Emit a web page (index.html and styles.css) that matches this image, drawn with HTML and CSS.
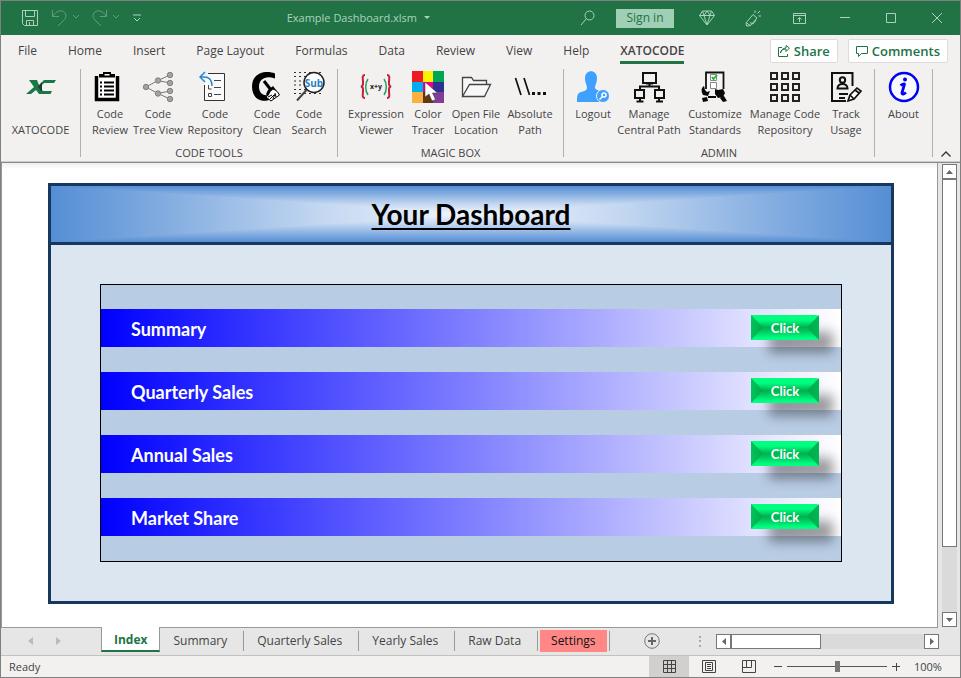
FILE: index.html
```html
<!DOCTYPE html>
<html lang="en">
<head>
<meta charset="utf-8">
<title>Example Dashboard.xlsm</title>
<link rel="stylesheet" href="styles.css">
</head>
<body>
<header class="titlebar">
  <div class="quick">
    <button class="tb-btn" aria-label="Save"><svg width="16" height="16" viewBox="0 0 16 16"><path d="M.5 .5h15v15h-13l-2-2zM3.500 .5v6h9v-6M4.500 15.500v-5h7v5M7.500 12v3"/></svg></button>
    <button class="tb-btn dim" aria-label="Undo"><svg width="28" height="18" viewBox="0 0 28 18"><path d="M1.500 1v6.500h6.500M2 7C5 2 10 .5 13 3c3 2.500 2 6 0 8l-6 6"/><path d="M22 6l3 3 3-3"/></svg></button>
    <button class="tb-btn dim" aria-label="Redo"><svg width="28" height="18" viewBox="0 0 28 18"><path d="M14.500 1v6.500H8M14 7C11 2 6 .5 3 3c-3 2.500-2 6 0 8l6 6"/><path d="M21 6l3 3 3-3"/></svg></button>
    <button class="tb-btn" aria-label="Customize Quick Access Toolbar"><svg width="8" height="8" viewBox="0 0 8 8"><path d="M0 1h8M1 4l3 3 3-3"/></svg></button>
  </div>
  <button class="doc-name">Example Dashboard.xlsm <svg width="6" height="4" viewBox="0 0 6 4"><path class="solid" d="M0 0h6l-3 3z"/></svg></button>
  <div class="account">
    <button class="tb-btn" aria-label="Search"><svg width="16" height="16" viewBox="0 0 16 16"><circle cx="9.500" cy="5.500" r="4.500"/><path d="M6.300 8.700L1 15"/></svg></button>
    <button class="signin">Sign in</button>
  </div>
  <div class="window-controls">
    <button class="tb-btn" aria-label="Premium"><svg width="16" height="16" viewBox="0 0 16 16"><path d="M3.500 1h9L15.500 5.500 8 15 .5 5.500zM.5 5.500h15M3.500 1l1.500 4.500L8 15l3-9.500L12.500 1M5 5.500L8 1l3 4.500"/></svg></button>
    <button class="tb-btn" aria-label="What's new"><svg width="16" height="17" viewBox="0 0 16 17"><path d="M8 4.500l4 3.500-6.500 7.500-4 .5L1 13zM1.500 13l4 2.500M11 10l-3 4-3-1.500M10 3V.5M12.500 3.500L15 1M13.500 6H16"/></svg></button>
    <button class="tb-btn" aria-label="Ribbon display options"><svg width="13" height="11" viewBox="0 0 13 11"><path d="M.5 .5h12v10H.5zM.5 2.500h12M6.500 9V4.500M4.500 6.500l2-2 2 2"/></svg></button>
    <button class="tb-btn" aria-label="Minimize"><svg width="10" height="10" viewBox="0 0 10 10"><path d="M0 4.500h10"/></svg></button>
    <button class="tb-btn" aria-label="Maximize"><svg width="10" height="10" viewBox="0 0 10 10"><path d="M.5 .5h9v9h-9z"/></svg></button>
    <button class="tb-btn" aria-label="Close"><svg width="10" height="10" viewBox="0 0 10 10"><path d="M0 0l10 10M10 0L0 10"/></svg></button>
  </div>
</header>

<nav class="menu">
  <a href="#">File</a><a href="#">Home</a><a href="#">Insert</a><a href="#">Page Layout</a><a href="#">Formulas</a><a href="#">Data</a><a href="#">Review</a><a href="#">View</a><a href="#">Help</a><a href="#" class="active">XATOCODE</a>
  <div class="menu-actions">
    <button class="action"><svg width="12" height="12" viewBox="0 0 12 12"><path d="M4 2.500H.5v9h9V9M2.500 8C3 5 5 4 8 4v2.500L11.500 3 8 .5V3C5 3 3 5 2.500 8z"/></svg>Share</button>
    <button class="action"><svg width="12" height="12" viewBox="0 0 12 12"><path d="M.5 1.500h11v7h-6l-3 3v-3h-2z"/></svg>Comments</button>
  </div>
</nav>

<section class="ribbon">
  <div class="group g-logo">
    <button class="tool">
      <svg width="32" height="32" viewBox="0 0 32 32"><g fill="#187848"><path d="M4 9h8l2 5 5-5h12l-2 3H19l-4 4 3 4h9l-1.500 3H14l-3-4-5 4H1l8-7z"/></g><path d="M17 11l-4 5 4 5z" fill="#223c33"/><path d="M20 13h8l-1 2h-7l-1 4h6" fill="none" stroke="#f3f1f0" stroke-width="2"/></svg>
      <span><br>XATOCODE</span></button>
  </div>
  <div class="group g-code">
    <div class="tools">
      <button class="tool"><svg width="32" height="32" viewBox="4 0 32 32"><path d="M6.500 5v23.500h21V5" fill="#fff" stroke="#000" stroke-width="3.500"/><path d="M9 6.500V3h4V1h8v2h4v3.500z" fill="#000"/><path d="M14.500 3h5v1.500h-5z" fill="#fff"/><path d="M10 11.500h2m2 0h10M10 15.500h2m2 0h10M10 19.500h2m2 0h10M10 23.500h2m2 0h10" stroke="#000" stroke-width="2"/></svg><span>Code<br>Review</span></button>
      <button class="tool"><svg width="32" height="32" viewBox="0 0 32 32"><path d="M4 16l12-6.500L28 4M16 9.500L28 12M4 16l12 6.500L28 20M16 22.500L28 28" fill="none" stroke="#777"/><g fill="#a3a3a3" stroke="#808080"><circle cx="4" cy="16" r="2.700"/><circle cx="16" cy="9.500" r="2.700"/><circle cx="16" cy="22.500" r="2.700"/><circle cx="28" cy="4" r="2.700"/><circle cx="28" cy="12" r="2.700"/><circle cx="28" cy="20" r="2.700"/><circle cx="28" cy="28" r="2.700"/></g></svg><span>Code<br>Tree View</span></button>
      <button class="tool"><svg width="32" height="32" viewBox="0 0 32 32"><path d="M5.500 14v15.500h20v-27H9" fill="#fafafa" stroke="#333"/><path d="M15 9.500h7M15 16.500h7M15 23.500h7M9.500 14v4h3M9.500 22.500h3v3h-3z" fill="none" stroke="#444"/><path d="M6 1L1 6l5 5M1 6h4c6 0 8 4 8 9" fill="none" stroke="#2488d8" stroke-width="1.500"/></svg><span>Code<br>Repository</span></button>
      <button class="tool"><svg width="32" height="32" viewBox="0 0 32 32"><path d="M24 7.500V2.500C16-1 1 1 1 15.500S14 32 20 28l-3-4c-6 1-9-3-9-8.500C8 8 15 4 24 7.500z" fill="#000"/><path d="M13 10l7 9" stroke="#000" stroke-width="3"/><path d="M17 19l5-4 6 8-8 6-5-6z" fill="#000"/><path d="M19 20.500l3-2.500c3 1 5 3 6.500 6L20 30l-5-4c2-1 3-3 4-5.500zM17 26l4-2M19 28l4-4M22 28l2-5M25 26l-1-4" fill="#fff" stroke="#000"/></svg><span>Code<br>Clean</span></button>
      <button class="tool"><svg width="32" height="32" viewBox="0 0 32 32"><path d="M1 1.500h30M1 5.500h30M1 10h30M1 14h30M1 18.500h30M1 22.500h30" stroke="#333" stroke-dasharray="2 3"/><path d="M13.500 19L4 29.500" stroke="#444" stroke-width="2"/><circle cx="21" cy="11.500" r="10" fill="#fff" stroke="#222" stroke-width="1.500"/><text x="21" y="15.500" text-anchor="middle" class="sub-text">Sub</text></svg><span>Code<br>Search</span></button>
    </div>
    <h2>CODE TOOLS</h2>
  </div>
  <div class="group g-magic">
    <div class="tools">
      <button class="tool"><svg width="32" height="32" viewBox="0 0 32 32"><path d="M5 4C1 4 3.500 9 3 13c0 2-2 2.500-2 2.500S3 16 3 18c.5 4-2 9 2 9M27 4c4 0 1.500 5 2 9 0 2 2 2.500 2 2.500s-2 .5-2 2.500c-.5 4 2 9-2 9" fill="none" stroke="#c8203c" stroke-width="2"/><path d="M8 8c-3 4-3 12 0 16M24 8c3 4 3 12 0 16" fill="none" stroke="#20a060" stroke-width="1.500"/><text x="16" y="18" text-anchor="middle" class="xy-text">x+y</text></svg><span>Expression<br>Viewer</span></button>
      <button class="tool"><svg width="32" height="32" viewBox="0 0 32 32"><path fill="#ed1c24" d="M0 0h11v11H0z"/><path fill="#fff200" d="M11 0h10v11H11z"/><path fill="#00a651" d="M21 0h11v11H21z"/><path fill="#00aeef" d="M0 11h11v10H0z"/><path fill="#ec008c" d="M11 11h10v10H11z"/><path fill="#2e3192" d="M21 11h11v10H21z"/><path fill="#fbb040" d="M0 21h11v11H0z"/><path fill="#603913" d="M11 21h10v11H11z"/><path fill="#7f3f98" d="M21 21h11v11H21z"/><path d="M13 11v15l4-3 3 7 3.500-1.500-3-6.500h5z" fill="#fff" stroke="#333" stroke-width=".5"/></svg><span>Color<br>Tracer</span></button>
      <button class="tool"><svg width="32" height="32" viewBox="0 0 32 32"><path d="M2.500 25V6.500h9l2 3h13v4M2.500 25.500l7-12h21l-6 12z" fill="#f8f8f8" stroke="#444" stroke-width="1.300"/></svg><span>Open File<br>Location</span></button>
      <button class="tool"><svg width="32" height="32" viewBox="0 0 32 32"><path d="M1.500 7l5.500 17M10 7l5.500 17" stroke="#111" stroke-width="1.700"/><path fill="#111" d="M18 21h3v3h-3zM23.500 21h3v3h-3zM29 21h3v3h-3z"/></svg><span>Absolute<br>Path</span></button>
    </div>
    <h2>MAGIC BOX</h2>
  </div>
  <div class="group g-admin">
    <div class="tools">
      <button class="tool"><svg width="32" height="32" viewBox="0 0 32 32"><path d="M8 7c0-9 12-9 12 0 0 5-2 7-2 10 1 3 8 2 9 7v7H0c0-5 0-9 4-10 4-1 6-2 6-4 0-3-2-5-2-10z" fill="#3fa0ff"/><circle cx="26" cy="25" r="6.500" fill="#3fa0ff" stroke="#f3f1f0"/><path d="M22.500 28.500l3-3" stroke="#fff" stroke-width="1.500"/><circle cx="27" cy="24" r="2" fill="none" stroke="#fff" stroke-width="1.500"/></svg><span>Logout</span></button>
      <button class="tool"><svg width="32" height="32" viewBox="0 0 32 32"><path d="M10 2h13v10H10zM2 19h9v8H2zM22 19h9v8h-9zM16.500 12v4M7 19v-3.500h19V19M7 27v3M26 27v3M3.500 30.500h7M23 30.500h7M13 12.500h7" fill="none" stroke="#111" stroke-width="2"/></svg><span>Manage<br>Central Path</span></button>
      <button class="tool"><svg width="32" height="32" viewBox="0 0 32 32"><path d="M7 18V1.500h17.500V18" fill="#f5f6f6" stroke="#111" stroke-width="1.800"/><path d="M11.500 3.500h6v6h-6zM11.500 11.500h6v6h-6z" fill="#fff" stroke="#888"/><path d="M13 6l1.500 2L18 4" fill="none" stroke="#22b422" stroke-width="1.800"/><path d="M5 15c-3 2-3 5-1 9l5 1 2-5-3 1-2-2zM3 27l5-1 1 4-5 1zM16 18l3 1 5-1 2 4-2 4-5 1-3-4zM21 27l4-2 3 5-4 1zM9 25h8v2H9z" fill="#080808"/></svg><span>Customize<br>Standards</span></button>
      <button class="tool"><svg width="32" height="32" viewBox="0 0 32 32"><path d="M2 2h6v6H2zM13 2h6v6h-6zM24 2h6v6h-6zM2 13h6v6H2zM13 13h6v6h-6zM24 13h6v6h-6zM2 24h6v6H2zM13 24h6v6h-6zM24 24h6v6h-6z" fill="none" stroke="#222" stroke-width="2"/></svg><span>Manage Code<br>Repository</span></button>
      <button class="tool"><svg width="32" height="32" viewBox="0 0 32 32"><path d="M22.500 15V2H2v28h14" fill="none" stroke="#111" stroke-width="2"/><circle cx="12.500" cy="9" r="2.700" fill="none" stroke="#111" stroke-width="2"/><path d="M7.500 17.500c0-6 10-6 10 0zM9 23h9M9 27h6" fill="none" stroke="#111" stroke-width="2"/><path d="M18 30l2-6 7-7 4 3-7 8zM20 24l4 4M25 19l4 3" fill="#fff" stroke="#111" stroke-width="1.700"/></svg><span>Track<br>Usage</span></button>
    </div>
    <h2>ADMIN</h2>
  </div>
  <div class="group g-about">
    <button class="tool"><svg width="32" height="32" viewBox="0 0 32 32"><circle cx="16" cy="16" r="14" fill="#f8f8ff" stroke="#0000f5" stroke-width="2.500"/><circle cx="17" cy="8.500" r="2" fill="#0000f5"/><path d="M12.500 14.500c2-1.500 4-2 4-1.500l-2.500 9c0 2 2 1 4-.5" fill="none" stroke="#0000f5" stroke-width="2.800"/></svg><span>About</span></button>
  </div>
  <button class="collapse" aria-label="Collapse the ribbon"><svg width="10" height="6" viewBox="0 0 10 6"><path d="M.5 5.500L5 1l4.500 4.500" fill="none" stroke="#333" stroke-width="1.300"/></svg></button>
</section>

<div class="workspace">
  <main class="sheet">
    <div class="dashboard">
      <h1><span>Your Dashboard</span></h1>
      <div class="board-body">
        <ul class="links">
          <li><span>Summary</span><button class="click">Click</button></li>
          <li><span>Quarterly Sales</span><button class="click">Click</button></li>
          <li><span>Annual Sales</span><button class="click">Click</button></li>
          <li><span>Market Share</span><button class="click">Click</button></li>
        </ul>
      </div>
    </div>
  </main>
  <div class="vscroll">
    <button class="sb-btn" aria-label="Scroll up"><svg width="7" height="4" viewBox="0 0 7 4"><path d="M0 4h7L3.500 0z"/></svg></button>
    <div class="v-thumb"></div>
    <button class="sb-btn end" aria-label="Scroll down"><svg width="7" height="4" viewBox="0 0 7 4"><path d="M0 0h7L3.500 4z"/></svg></button>
  </div>
</div>

<div class="sheetbar">
  <div class="tab-nav">
    <button aria-label="Previous sheet"><svg width="5" height="8" viewBox="0 0 5 8"><path d="M5 0v8L0 4z"/></svg></button>
    <button aria-label="Next sheet"><svg width="5" height="8" viewBox="0 0 5 8"><path d="M0 0v8l5-4z"/></svg></button>
  </div>
  <div class="tabs">
    <button class="tab current">Index</button>
    <button class="tab">Summary</button>
    <button class="tab">Quarterly Sales</button>
    <button class="tab">Yearly Sales</button>
    <button class="tab">Raw Data</button>
    <button class="tab marked"><span>Settings</span></button>
  </div>
  <button class="add" aria-label="New sheet"><svg width="16" height="16" viewBox="0 0 16 16"><circle cx="8" cy="8" r="7.300" fill="none" stroke="#777"/><path d="M4 8h8M8 4v8" stroke="#666" stroke-width="2"/></svg></button>
  <svg class="grip" width="2" height="11" viewBox="0 0 2 11"><path d="M0 0h2v2H0zM0 4h2v2H0zM0 9h2v2H0z"/></svg>
  <div class="hscroll">
    <button class="sb-btn" aria-label="Scroll left"><svg width="4" height="7" viewBox="0 0 4 7"><path d="M4 0v7L0 3.500z"/></svg></button>
    <div class="h-thumb"></div>
    <button class="sb-btn end" aria-label="Scroll right"><svg width="4" height="7" viewBox="0 0 4 7"><path d="M0 0v7l4-3.500z"/></svg></button>
  </div>
</div>

<footer class="status">
  <span class="ready">Ready</span>
  <button class="view on" aria-label="Normal view"><svg width="13" height="13" viewBox="0 0 13 13"><path d="M.5 .5h12v12H.5zM4.500 .5v12M8.500 .5v12M.5 4.500h12M.5 8.500h12"/></svg></button>
  <button class="view" aria-label="Page layout view"><svg width="14" height="13" viewBox="0 0 14 13"><path d="M.5 .5h13v12H.5zM3.500 2.500h7v8h-7zM5 4.500h4M5 6.500h4M5 8.500h4"/></svg></button>
  <button class="view" aria-label="Page break view"><svg width="14" height="13" viewBox="0 0 14 13"><path d="M.5 .5h13v12H.5zM4.500 .5v7M9.500 .5v7h-9"/></svg></button>
  <button class="zoom-btn" aria-label="Zoom out"><svg width="8" height="8" viewBox="0 0 8 8"><path d="M0 3.500h8"/></svg></button>
  <input class="zoom" type="range" min="0" max="100" value="50" aria-label="Zoom">
  <button class="zoom-btn" aria-label="Zoom in"><svg width="8" height="8" viewBox="0 0 8 8"><path d="M0 3.500h8M4.500 0v8"/></svg></button>
  <span class="percent">100%</span>
</footer>
</body>
</html>
```
FILE: styles.css
```css
* { box-sizing: border-box; }

body {
  margin: 0;
  min-height: 100vh;
  display: flex;
  flex-direction: column;
  border: 1px solid #808080;
  background: #e6e6e6;
  color: #444;
  font: 12px/16px "Open Sans", "Noto Sans", sans-serif;
}

button {
  margin: 0;
  padding: 0;
  border: 0;
  background: none;
  color: inherit;
  font: inherit;
}

svg { display: block; flex: none; }
a { color: inherit; text-decoration: none; }

/* Title bar */
.titlebar {
  height: 34px;
  display: flex;
  align-items: center;
  background: #217346;
  color: #a9d3bb;
}
.titlebar svg { fill: none; stroke: #a9d3bb; }
.titlebar .solid { fill: #a9d3bb; stroke: none; }
.quick { display: flex; align-items: center; gap: 13px; padding-left: 21px; }
.quick .dim { opacity: .45; }
.tb-btn { display: flex; align-items: center; justify-content: center; }
.doc-name { display: flex; align-items: center; gap: 7px; margin-left: auto; font-size: 11px; }
.account { display: flex; gap: 20px; margin: 0 10px 0 150px; }
.signin {
  width: 58px;
  height: 19px;
  background: #9fcfb4;
  color: #217346;
}
.window-controls { display: flex; }
.window-controls .tb-btn { width: 46px; }

/* Menu */
.menu {
  height: 31px;
  display: flex;
  align-items: center;
  gap: 31px;
  padding-left: 17px;
  background: #f3f1f0;
}
.menu a { line-height: 20px; border-bottom: 3px solid transparent; padding-top: 3px; }
.menu .active { font-weight: 600; border-color: #217346; }
.menu-actions { display: flex; gap: 10px; margin-left: auto; padding-right: 12px; }
.action {
  display: flex;
  align-items: center;
  gap: 4px;
  height: 24px;
  padding: 0 7px;
  border: 1px solid #dedcda;
  border-radius: 2px;
  background: #fff;
  color: #217346;
  font-weight: 600;
  font-size: 13px;
}
.action svg { fill: none; stroke: #217346; }

/* Ribbon */
.ribbon {
  height: 96px;
  display: flex;
  padding: 3px 0 4px;
  border-bottom: 1px solid #ccc;
  background: #f3f1f0;
  font-size: 11px;
}
.group {
  display: flex;
  flex-direction: column;
  justify-content: space-between;
  border-right: 1px solid #b2b0ae;
}
.tools { display: grid; }
.g-logo { width: 80px; }
.g-code .tools { padding: 0 8px; grid-template-columns: 42px 54px 60px 44px 40px; }
.g-magic .tools { padding: 0 6px 0 7px; grid-template-columns: 62px 42px 54px 54px; }
.g-admin .tools { padding: 0 4px 0 6px; grid-template-columns: 46px 66px 66px 74px 48px; }
.g-about { width: 58px; }
.tool {
  display: flex;
  flex-direction: column;
  align-items: center;
  gap: 3px;
  padding-top: 2px;
  white-space: nowrap;
}
.group h2 {
  margin: 0;
  font-size: 11px;
  font-weight: 400;
  line-height: 8px;
  text-align: center;
}
.sub-text { font: bold 10px "Open Sans", sans-serif; fill: #1f7fc8; }
.xy-text { font: bold 7px "Open Sans", sans-serif; fill: #222; }
.collapse { align-self: flex-end; margin-left: 8px; }

/* Worksheet */
.workspace { flex: 1; display: flex; border-top: 1px solid #8a8a8a; }
.sheet {
  flex: 1;
  display: flex;
  padding: 20px 43px 23px 46px;
  border: solid #999;
  border-width: 0 1px;
  background: linear-gradient(#eee, #fff 6px);
}
.dashboard {
  flex: 1;
  display: flex;
  flex-direction: column;
  border: 3px solid #17375e;
  background: #dce6f1;
  font-family: Lato, "Open Sans", sans-serif;
}
.dashboard h1 {
  position: relative;
  margin: 0;
  height: 59px;
  border-bottom: 3px solid #17375e;
  background: linear-gradient(#558ed5, #8eb4e3 17%, #c6d9f1 33%, #f2f6fc 50%, #c6d9f1 67%, #8eb4e3 83%, #558ed5);
  color: #000;
  font-size: 28px;
  font-weight: 700;
  line-height: 56px;
  text-align: center;
}
.dashboard h1::before {
  content: "";
  position: absolute;
  inset: 0;
  clip-path: polygon(0 0, 100% 100%, 100% 0, 0 100%);
  background: linear-gradient(90deg, #558ed5, #8eb4e3 17%, #c6d9f1 33%, #f2f6fc 50%, #c6d9f1 67%, #8eb4e3 83%, #558ed5);
}
.dashboard h1 span {
  position: relative;
  text-decoration: underline;
  text-decoration-thickness: 2px;
  text-underline-offset: 3px;
}
.board-body { padding: 39px 49px; }
.links {
  display: grid;
  gap: 25px;
  margin: 0;
  padding: 24px 0 25px;
  border: 1px solid #000;
  background: #b8cce4;
  list-style: none;
  overflow: hidden;
}
.links li {
  height: 38px;
  display: flex;
  align-items: flex-start;
  justify-content: space-between;
  padding: 6px 22px 0 30px;
  background: linear-gradient(90deg, #00f, #fff);
  color: #fff;
  font-size: 18px;
  font-weight: 700;
  line-height: 28px;
}
.click {
  position: relative;
  z-index: 0;
  width: 68px;
  height: 25px;
  padding-top: 2px;
  border-radius: 0 3px 1px 1px;
  background: linear-gradient(#00ff80 20%, #00b050 50%, #00c85f 65%, #00ff80 92%);
  box-shadow: 16px 15px 12px -2px rgba(0, 0, 0, .38);
  font-size: 13px;
  line-height: 23px;
}
/* Darker bevel facets at the two ends */
.click::before {
  content: "";
  position: absolute;
  z-index: -1;
  inset: 0;
  clip-path: polygon(0 0, 12px 50%, calc(100% - 12px) 50%, 100% 0, 100% 100%, calc(100% - 12px) 50%, 12px 50%, 0 100%);
  background: linear-gradient(90deg, #00c45c, #00a849 12px, #00a849 calc(100% - 12px), #00b853);
}

/* Scroll bars */
.vscroll {
  width: 15px;
  display: flex;
  flex-direction: column;
  margin: 1px 3px 0 4px;
  background: #dadada;
}
.sb-btn {
  width: 15px;
  height: 15px;
  display: flex;
  align-items: center;
  justify-content: center;
  border: 1px solid #777;
  background: #fff;
}
.sb-btn svg { fill: #666; }
.v-thumb { flex: 0 1 368px; border: 1px solid #777; background: #fff; }
.vscroll .end { margin-top: auto; }
.h-thumb { flex: 0 1 90px; border: 1px solid #777; background: #fff; }
.hscroll .end { margin-left: auto; }

/* Sheet tabs */
.sheetbar {
  height: 29px;
  display: flex;
  align-items: center;
  border-bottom: 1px solid #c3c1bf;
  background: linear-gradient(#999, #999) 0 0 / calc(100% - 22px) 1px no-repeat #e6e6e6;
}
.tab-nav {
  width: 100px;
  display: flex;
  gap: 23px;
  padding-left: 27px;
}
.tab-nav svg { fill: #bbb; }
.tabs { display: flex; align-self: stretch; }
.tab {
  position: relative;
  padding: 0 17px 0 13px;
}
.tab:not(.current)::after {
  content: "";
  position: absolute;
  top: 4px;
  right: 0;
  width: 1px;
  height: 20px;
  background: #999;
}
.current {
  height: 25px;
  padding: 3px 12px 0;
  border: solid #999;
  border-width: 0 1px;
  border-bottom: 2px solid #217346;
  background: #fff;
  color: #217346;
  font-weight: 700;
}
.marked { padding: 3px 3px 3px 2px; }
.marked span {
  display: block;
  padding: 0 11px;
  background: #ff8886;
  color: #111;
  line-height: 22px;
}
.add { padding-left: 34px; }
.sheetbar::after { content: ""; width: 21px; }
.grip { fill: #aaa; margin-left: auto; }
.hscroll { width: 223px; display: flex; margin-left: 15px; background: #dadada; }

/* Status bar */
.status {
  height: 21px;
  display: flex;
  align-items: center;
  background: #f3f1f0;
  font-size: 11px;
}
.ready { margin: 0 auto 0 8px; }
.view {
  width: 40px;
  height: 100%;
  display: flex;
  align-items: center;
  justify-content: center;
}
.view svg, .zoom-btn svg { fill: none; stroke: #444; }
.on { background: #d2d0ce; }
.zoom-btn { margin-left: 5px; }
.zoom {
  width: 100px;
  height: 11px;
  margin: 0 0 0 5px;
  appearance: none;
  background: linear-gradient(#555, #555) center / 100% 1px no-repeat;
}
.zoom::-webkit-slider-thumb {
  appearance: none;
  width: 5px;
  height: 11px;
  background: #777;
}
.percent { width: 60px; padding-left: 14px; }
```
